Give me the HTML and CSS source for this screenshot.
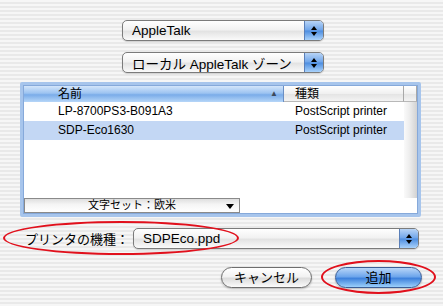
FILE: index.html
```html
<!DOCTYPE html>
<html lang="ja">
<head>
    <meta charset="UTF-8">
    <title>プリンタを追加</title>
    <link rel="stylesheet" href="styles.css">
</head>
<body>
    <div class="sheet">
        <!-- 接続方式 -->
        <div class="popups">
            <div class="popup">
                <span class="popup-text">AppleTalk</span>
                <span class="popup-arrows"><i class="up"></i><i class="down"></i></span>
            </div>
            <div class="popup">
                <span class="popup-text">ローカル AppleTalk ゾーン</span>
                <span class="popup-arrows"><i class="up"></i><i class="down"></i></span>
            </div>
        </div>

        <!-- プリンタ一覧 -->
        <div class="list-frame">
            <div class="list">
                <div class="list-head">
                    <div class="col-name head-sel">名前<span class="sort">▲</span></div>
                    <div class="col-kind head-plain">種類</div>
                    <div class="col-corner head-plain"></div>
                </div>
                <div class="list-body">
                    <div class="rows">
                        <div class="row">
                            <div class="col-name">LP-8700PS3-B091A3</div>
                            <div class="col-kind">PostScript printer</div>
                        </div>
                        <div class="row selected">
                            <div class="col-name">SDP-Eco1630</div>
                            <div class="col-kind">PostScript printer</div>
                        </div>
                    </div>
                    <div class="vscroll"></div>
                </div>
                <div class="list-foot">
                    <div class="charset">文字セット：欧米<span class="tri"></span></div>
                    <div class="foot-fill"></div>
                    <div class="foot-corner"></div>
                </div>
            </div>
        </div>

        <!-- 機種 -->
        <div class="model-row">
            <span class="model-label">プリンタの機種：</span>
            <div class="popup wide">
                <span class="popup-text">SDPEco.ppd</span>
                <span class="popup-arrows"><i class="up"></i><i class="down"></i></span>
            </div>
            <div class="mark mark-model"></div>
        </div>

        <div class="buttons">
            <div class="btn">キャンセル</div>
            <div class="btn btn-default">追加</div>
            <div class="mark mark-add"></div>
        </div>
    </div>
</body>
</html>
```

FILE: styles.css
```css
body {
    margin: 0;
    font-family: "Liberation Sans", "Noto Sans CJK JP", sans-serif;
    color: #000;
}

.sheet {
    position: relative;
    width: 443px;
    height: 306px;
    box-sizing: border-box;
    padding-top: 20px;
    background: repeating-linear-gradient(to bottom, #f6f6f6 0, #f6f6f6 2px, #e9e9e9 2px, #e9e9e9 4px);
}

.popups {
    display: flex;
    flex-direction: column;
    gap: 11px;
    padding-left: 122px;
}

.popup {
    width: 202px;
    height: 21px;
    box-sizing: border-box;
    display: flex;
    align-items: center;
    border: 1px solid #7b7b7b;
    border-radius: 5px;
    background: linear-gradient(to bottom, #ffffff 0%, #f2f2f2 45%, #e3e3e3 55%, #fafafa 100%);
    box-shadow: 0 1px 1px rgba(0, 0, 0, 0.15);
    overflow: hidden;
}

.popup-text {
    flex: 1;
    padding-left: 9px;
    font-size: 13.5px;
    white-space: nowrap;
}

.popup-arrows {
    width: 18px;
    height: 100%;
    display: flex;
    flex-direction: column;
    align-items: center;
    justify-content: center;
    gap: 2px;
    border-left: 1px solid #5a7fb8;
    background: linear-gradient(to bottom, #b8d4f6 0%, #6fa5ea 48%, #4d8de0 52%, #a9d2fb 100%);
}

.popup-arrows i {
    width: 0;
    height: 0;
    border-left: 3px solid transparent;
    border-right: 3px solid transparent;
}

.popup-arrows .up {
    border-bottom: 4px solid #000;
}

.popup-arrows .down {
    border-top: 4px solid #000;
}

/* list */

.list-frame {
    margin: 9px 0 0 20px;
    width: 401px;
    height: 135px;
    box-sizing: border-box;
    border: 3px solid #a7c5ec;
    border-radius: 2px;
    box-shadow: inset 0 0 0 1px #86a9da;
    padding: 1px;
    background: #fff;
}

.list {
    display: flex;
    flex-direction: column;
    height: 100%;
    font-size: 12px;
}

.list-head {
    display: flex;
    height: 16px;
    line-height: 16px;
}

.col-name {
    width: 260px;
    box-sizing: border-box;
    padding-left: 34px;
    position: relative;
}

.col-kind {
    width: 120px;
    box-sizing: border-box;
    padding-left: 11px;
}

.col-corner {
    flex: 1;
}

.head-sel {
    background: linear-gradient(to bottom, #d3e5fa 0%, #9cc3f1 45%, #7aace9 55%, #b6d6f8 100%);
    border-right: 1px solid #6b8fc4;
}

.head-plain {
    background: linear-gradient(to bottom, #ffffff 0%, #f0f0f0 50%, #e4e4e4 55%, #f3f3f3 100%);
    border-right: 1px solid #a8a8a8;
    border-bottom: 1px solid #b8b8b8;
}

.sort {
    position: absolute;
    right: 5px;
    top: 0;
    font-size: 8px;
    color: #3e4a5a;
}

.list-body {
    flex: 1;
    display: flex;
}

.rows {
    width: 380px;
}

.row {
    display: flex;
    height: 19px;
    line-height: 19px;
}

.row.selected {
    background: #c3d7f4;
}

.vscroll {
    flex: 1;
    background: linear-gradient(to right, #fafafa 0%, #eeeeee 40%, #d2d2d2 100%);
}

.list-foot {
    display: flex;
    height: 15px;
}

.charset {
    width: 216px;
    box-sizing: border-box;
    position: relative;
    border: 1px solid #8a8a8a;
    background: linear-gradient(to bottom, #dedede 0%, #f4f4f4 40%, #ffffff 100%);
    font-size: 11px;
    line-height: 13px;
    text-align: center;
}

.tri {
    position: absolute;
    right: 5px;
    top: 5px;
    width: 0;
    height: 0;
    border-left: 4px solid transparent;
    border-right: 4px solid transparent;
    border-top: 5px solid #000;
}

.foot-fill {
    width: 164px;
    background: #fff;
}

.foot-corner {
    flex: 1;
    background: #fff;
}

/* model */

.model-row {
    position: relative;
    display: flex;
    align-items: center;
    margin-top: 11px;
    padding-left: 25px;
    height: 21px;
}

.model-label {
    width: 108px;
    font-size: 13px;
}

.popup.wide {
    width: 286px;
}

.buttons {
    position: relative;
    display: flex;
    justify-content: flex-end;
    gap: 23px;
    margin-top: 18px;
    padding-right: 21px;
}

.btn {
    width: 91px;
    height: 21px;
    box-sizing: border-box;
    border: 1px solid #6e6e6e;
    border-radius: 11px;
    background: linear-gradient(to bottom, #ffffff 0%, #f2f2f2 45%, #dcdcdc 55%, #fbfbfb 100%);
    box-shadow: 0 1px 2px rgba(0, 0, 0, 0.25);
    font-size: 13px;
    line-height: 19px;
    text-align: center;
}

.btn-default {
    width: 87px;
    border-color: #3b5e96;
    background: linear-gradient(to bottom, #b9d6f8 0%, #6ea6ec 45%, #3f82dc 55%, #9bd0fb 100%);
}

/* red marks drawn over the dialog */

.mark {
    position: absolute;
    border: 2.5px solid #e1101c;
    border-radius: 50%;
    pointer-events: none;
}

.mark-model {
    left: 3px;
    top: -7px;
    width: 232px;
    height: 30px;
}

.mark-add {
    left: 321px;
    top: -7px;
    width: 111px;
    height: 30px;
}
```
